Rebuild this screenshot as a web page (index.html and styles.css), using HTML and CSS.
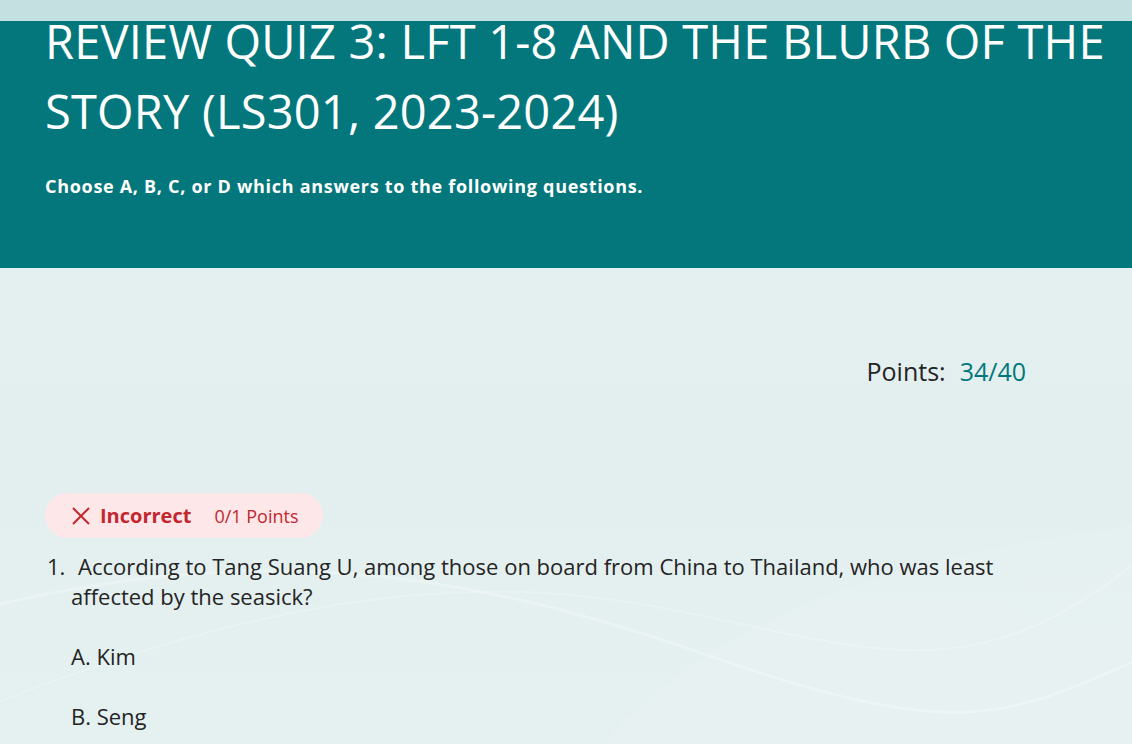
FILE: index.html
```html
<!DOCTYPE html>
<html lang="en">
<head>
<meta charset="utf-8">
<title>Review Quiz 3</title>
<link rel="stylesheet" href="styles.css">
</head>
<body>
<div class="topbar"></div>
<div class="page">
  <svg class="waves" viewBox="0 0 1132 744" preserveAspectRatio="none" aria-hidden="true">
    <path d="M0 600 C 250 540, 450 560, 700 650 S 1000 720, 1132 660" fill="none" stroke="#ffffff" stroke-opacity="0.25" stroke-width="3"/>
    <path d="M0 700 C 200 620, 420 560, 640 600 S 960 700, 1132 560" fill="none" stroke="#ffffff" stroke-opacity="0.22" stroke-width="2"/>
    <path d="M600 744 C 700 640, 820 560, 1132 520 L1132 744 Z" fill="#ffffff" fill-opacity="0.1"/>
  </svg>
  <header class="hero">
    <h1 class="title">REVIEW QUIZ 3: LFT 1-8 AND THE BLURB OF THE STORY (LS301, 2023-2024)</h1>
    <p class="subtitle">Choose A, B, C, or D which answers to the following questions.</p>
  </header>
  <main class="content">
    <div class="score"><span class="score-label">Points:</span><span class="score-value">34/40</span></div>
    <section class="question">
      <div class="badge">
        <svg class="badge-icon" viewBox="0 0 20 20" width="20" height="20" aria-hidden="true">
          <path d="M2 2 L18 18 M18 2 L2 18" stroke="#c4262e" stroke-width="2" fill="none"/>
        </svg>
        <span class="badge-label">Incorrect</span>
        <span class="badge-points">0/1 Points</span>
      </div>
      <div class="q-text"><span class="q-num">1.</span>According to Tang Suang U, among those on board from China to Thailand, who was least affected by the seasick?</div>
      <div class="option">A. Kim</div>
      <div class="option">B. Seng</div>
    </section>
  </main>
</div>
</body>
</html>
```
FILE: styles.css
```css
* { box-sizing: border-box; }
html, body { margin: 0; padding: 0; height: 100%; overflow: hidden; }
body {
  font-family: "Open Sans", "Noto Sans", sans-serif;
  background: #e5f0f0;
  color: #242424;
}
.topbar {
  height: 21px;
  background: #c5e0e1;
  position: relative;
  z-index: 2;
}
.page {
  position: relative;
  min-height: 723px;
  background: linear-gradient(180deg, #e6f2f2 0%, #e3efef 60%, #e5f0f0 100%);
}
.waves {
  position: absolute;
  left: 0; top: 0;
  width: 100%; height: 100%;
  pointer-events: none;
}
.hero {
  position: relative;
  background: #03777b;
  height: 247px;
  padding: 0 20px 0 45px;
  overflow: hidden;
}
.title {
  margin: -15px 0 0 0;
  font-weight: 400;
  font-size: 47px;
  line-height: 70px;
  color: #ffffff;
  letter-spacing: 0.2px;
}
.subtitle {
  margin: 28px 0 0 0;
  font-size: 18px;
  font-weight: 700;
  color: #ffffff;
  letter-spacing: 0.7px;
}
.content {
  position: relative;
  padding: 0 45px;
}
.score {
  display: flex;
  justify-content: flex-end;
  gap: 14px;
  padding: 86px 61px 0 0;
  font-size: 25px;
  line-height: 34px;
}
.score-label { color: #242424; }
.score-value { color: #03787c; }
.question { margin-top: 105px; }
.badge {
  display: inline-flex;
  align-items: center;
  height: 45px;
  padding: 0 25px 0 26px;
  border-radius: 23px;
  background: #fde7e9;
  color: #c4262e;
}
.badge-icon { width: 20px; height: 20px; margin-right: 9px; }
.badge-label { font-size: 20px; font-weight: 700; margin-right: 23px; }
.badge-points { font-size: 18px; }
.q-text {
  margin-top: 13px;
  padding-left: 26px;
  text-indent: -24px;
  font-size: 22px;
  line-height: 30px;
  color: #242424;
  max-width: 965px;
}
.q-num { display: inline-block; text-indent: 0; width: 31px; }
.option {
  margin-left: 26px;
  margin-top: 30px;
  font-size: 22px;
  line-height: 30px;
}
```
